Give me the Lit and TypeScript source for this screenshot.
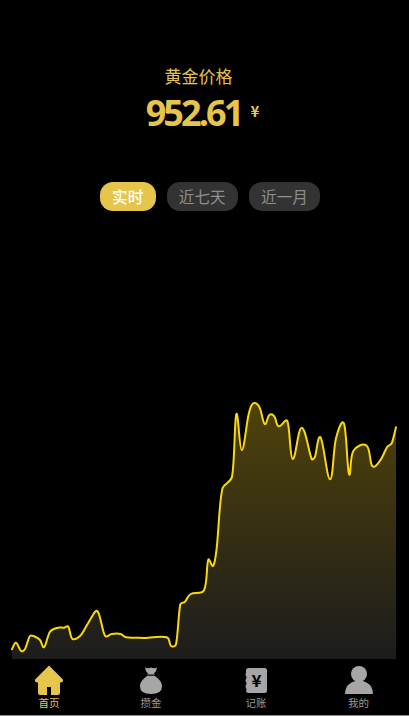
import { LitElement, html, css, svg } from "lit";
import { customElement, state } from "lit/decorators.js";

const PTS: [number, number][] = [
  [12,649.3],[16,642.7],[21,651],[25,649],[30,636],[35,636.7],[40,640],[44.3,647],[50,631.7],[58,627.7],[64,627.7],[68.3,626.7],[72.3,638.7],[80,636],[87,625],[92,616.5],[96,611],[98.7,613.5],[101,621.7],[105.3,636],[111.7,634],[120.7,634],[126,637.3],[136.7,637.7],[143,638],[166.7,637.3],[171,646],[176,644.3],[180.3,604.3],[185,601.7],[190.7,594],[204,590.3],[208.3,559.7],[213.3,565.7],[216.7,548],[222.3,489],[232,476.7],[236.3,414.3],[241.7,450],[248.3,416],[251.7,405],[256,403.3],[260,408.3],[264.7,424],[269.3,415],[274.3,416.3],[278.7,426.3],[287.3,421],[292.7,459],[301.7,427.7],[311.7,459],[315,456.7],[320.7,437.7],[330,479.3],[336,438.3],[344,423.7],[349,474],[353.3,451],[366.7,445.7],[372.3,466],[380,460.7],[387.3,446.7],[391.7,443.3],[396,427.3],
];

function handle(from: [number, number], to: [number, number], dx: number, dy: number): [number, number] {
  const k = 0.2;
  let vx = dx * k, vy = dy * k;
  const seg = Math.hypot(to[0] - from[0], to[1] - from[1]);
  const len = Math.hypot(vx, vy) || 1;
  const max = seg * 0.38;
  if (len > max) { vx *= max / len; vy *= max / len; }
  return [vx, vy];
}

function smooth(p: [number, number][]): string {
  let d = `M${p[0][0]} ${p[0][1]}`;
  for (let i = 0; i < p.length - 1; i++) {
    const a = p[Math.max(i - 1, 0)], b = p[i], c = p[i + 1], e = p[Math.min(i + 2, p.length - 1)];
    const h1 = handle(b, c, c[0] - a[0], c[1] - a[1]);
    const h2 = handle(b, c, e[0] - b[0], e[1] - b[1]);
    d += ` C${(b[0] + h1[0]).toFixed(1)} ${(b[1] + h1[1]).toFixed(1)} ${(c[0] - h2[0]).toFixed(1)} ${(c[1] - h2[1]).toFixed(1)} ${c[0]} ${c[1]}`;
  }
  return d;
}

const LINE = smooth(PTS);
const AREA = `${LINE} L396 659 L12 659 Z`;

const ICONS = [
  svg`<path fill="currentColor" stroke="currentColor" stroke-width="2" stroke-linejoin="round" d="M14 1 L1 14 Q0.5 15.5 2.5 15.5 L4 15.5 L4 27 Q4 28 5 28 L11.5 28 L11.5 21 Q11.5 20 12.5 20 L15.5 20 Q16.5 20 16.5 21 L16.5 28 L23 28 Q24 28 24 27 L24 15.5 L25.5 15.5 Q27.5 15.5 27 14 Z"/><rect x="12" y="21" width="4" height="8" fill="#000"/>`,
  svg`<path fill="currentColor" d="M8 1.5 Q11 3 14 1.5 Q17 3 20 1.5 Q19.5 5.5 17 7.5 L18 8.5 L10 8.5 L11 7.5 Q8.5 5.5 8 1.5 Z"/><path fill="currentColor" d="M10.5 9.8 L17.5 9.8 Q25 14.5 25 20.5 Q25 28 14 28 Q3 28 3 20.5 Q3 14.5 10.5 9.8 Z"/>`,
  svg`<path fill="currentColor" d="M6.5 2 L22.5 2 Q25 2 25 4.5 L25 24.5 Q25 27 22.5 27 L6.5 27 Q4 27 4 25 Q5 23.5 4 22 Q3 20.5 4 19 Q5 17.5 4 16 Q3 14.5 4 13 Q5 11.5 4 10 Q3 8.5 4 7 L4 4.5 Q4 2 6.5 2 Z"/><text x="14.5" y="20.5" text-anchor="middle" font-size="17" font-weight="700" font-family="'Noto Sans CJK SC', sans-serif" fill="#000">¥</text>`,
  svg`<circle cx="14" cy="8" r="8" fill="currentColor"/><path fill="currentColor" d="M0 28 Q0 20 6.5 16.5 Q10 14.5 14 14.5 Q18 14.5 21.5 16.5 Q28 20 28 28 Z"/>`,
];

@customElement("app-root")
export class AppRoot extends LitElement {
  static styles = css`
    :host {
      display: flex;
      flex-direction: column;
      width: 409px;
      height: 716px;
      background: #000;
      overflow: hidden;
      font-family: "Open Sans", "Noto Sans CJK SC", sans-serif;
    }
    .head {
      display: flex;
      flex-direction: column;
      align-items: center;
      padding-top: 64px;
      height: 182px;
      box-sizing: border-box;
      flex: none;
    }
    .title {
      font-family: "Noto Sans CJK SC", sans-serif;
      font-size: 17px;
      line-height: 24px;
      color: #e5c54c;
      margin-right: 12px;
    }
    .price {
      display: flex;
      align-items: center;
      gap: 9px;
      margin-top: 2px;
      margin-left: -4px;
      color: #e5c54c;
    }
    .num {
      font-size: 36px;
      font-weight: 700;
      line-height: 46px;
      letter-spacing: -2.9px;
    }
    .cur {
      font-family: "Noto Sans CJK SC", sans-serif;
      font-size: 15px;
      font-weight: 700;
      line-height: 18px;
      margin-top: -4px;
    }
    .tabs {
      display: flex;
      justify-content: center;
      gap: 11px;
      padding-left: 11px;
      flex: none;
    }
    .tab {
      font-family: "Noto Sans CJK SC", sans-serif;
      height: 29px;
      line-height: 29px;
      padding: 0 12.25px;
      border-radius: 13px;
      background: #333;
      color: #8e8e8e;
      font-size: 15.6px;
    }
    .tab.on {
      background: #e5c54c;
      color: #fff;
      font-weight: 500;
    }
    .chart {
      flex: 1;
      min-height: 0;
      position: relative;
    }
    .chart svg {
      position: absolute;
      left: 0;
      bottom: 0;
      display: block;
    }
    nav {
      flex: none;
      height: 56px;
      display: grid;
      grid-template-columns: 98px 106px 104px 1fr;
      border-bottom: 1px solid #8a8a8a;
      box-sizing: content-box;
    }
    .item {
      display: flex;
      flex-direction: column;
      align-items: center;
      color: #a6a6a6;
      font-family: "Noto Sans CJK SC", sans-serif;
      font-size: 10.5px;
      line-height: 14px;
      padding-top: 7px;
    }
    .item.on { color: #e5c54c; }
    .item svg { display: block; width: 28px; height: 29px; }
    .lab { margin-top: 1px; color: #9a9a9a; }
    .item.on .lab { color: #e5c54c; }
  `;

  @state() tab = 0;

  render() {
    const tabs = ["实时", "近七天", "近一月"];
    const nav = ["首页", "攒金", "记账", "我的"];
    return html`
      <div class="head">
        <div class="title">黄金价格</div>
        <div class="price"><span class="num">952.61</span><span class="cur">¥</span></div>
      </div>
      <div class="tabs">
        ${tabs.map((t, i) => html`<div class="tab ${i === this.tab ? "on" : ""}" @click=${() => (this.tab = i)}>${t}</div>`)}
      </div>
      <div class="chart">
        <svg width="409" height="270" viewBox="0 389 409 270" aria-hidden="true">
          <defs>
            <linearGradient id="g" gradientUnits="userSpaceOnUse" x1="0" y1="403" x2="0" y2="659">
              <stop offset="0" stop-color="#4f420a"/>
              <stop offset="1" stop-color="#1c1c1c"/>
            </linearGradient>
          </defs>
          <path d=${AREA} fill="url(#g)"/>
          <path d=${LINE} fill="none" stroke="#f8d90f" stroke-width="2" stroke-linejoin="round" stroke-linecap="round"/>
        </svg>
      </div>
      <nav>
        ${nav.map((n, i) => html`<div class="item ${i === 0 ? "on" : ""}">
          <svg viewBox="0 0 28 29">${ICONS[i]}</svg>
          <span class="lab">${n}</span>
        </div>`)}
      </nav>
    `;
  }
}
